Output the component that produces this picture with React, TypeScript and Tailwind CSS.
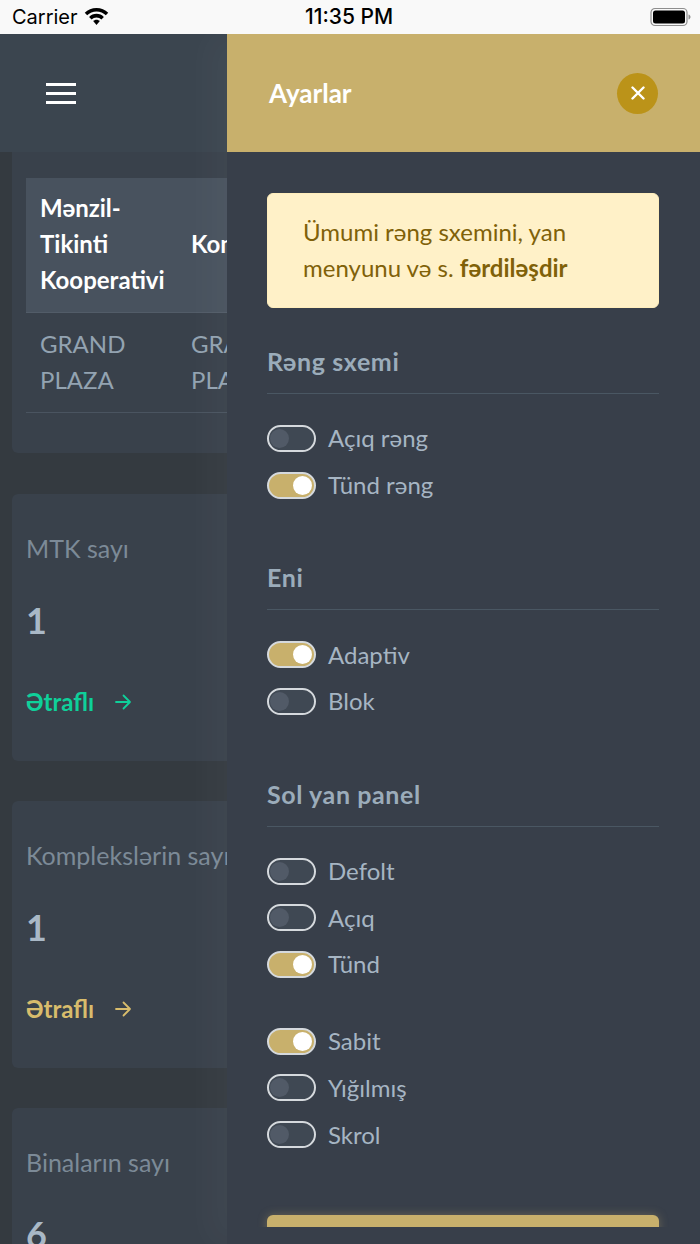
const font = "[font-family:Lato,'Noto_Sans',sans-serif]";

function Toggle({ on, label }: { on?: boolean; label: string }) {
  return (
    <div className="flex items-center h-[46.7px]">
      <div className={`relative w-[49px] h-[27px] rounded-full border-2 border-[#d5d9dd] ${on ? "bg-[#c8b06c]" : "bg-[#3f4853]"}`}>
        <div className={`absolute top-[2px] w-[19px] h-[19px] rounded-full ${on ? "right-[2px] bg-white" : "left-[1px] bg-[#515a67]"}`} />
      </div>
      <span className="ml-[12px] text-[24px] text-[#a6b5c3]">{label}</span>
    </div>
  );
}

function Section({ title, children, className }: { title: string; children: React.ReactNode; className?: string }) {
  return (
    <section className={className}>
      <h2 className="text-[25px] tracking-[0.6px] leading-[36px] font-bold text-[#9bacba] pb-[14px] -mt-[1px] border-b border-[#4a5763]">{title}</h2>
      <div className="mt-[21px]">{children}</div>
    </section>
  );
}

function StatCard({ title, value, color }: { title: string; value: string; color?: string }) {
  return (
    <div className="h-[267px] mb-[40px] rounded-l-[6px] bg-[#39414b] pl-[14px] pt-[36px] overflow-hidden">
      <div className="text-[25px] leading-[36px] text-[#7c8a97] whitespace-nowrap">{title}</div>
      <div className="mt-[27px] text-[36px] leading-[54px] font-bold text-[#a9b8c6]">{value}</div>
      {color && (
        <div className="mt-[37px] flex items-center gap-[20px] text-[24px] leading-[36px] font-bold" style={{ color }}>
          <span>Ətraflı</span>
          <svg width="18" height="18" viewBox="0 0 18 18" fill="none" stroke="currentColor" strokeWidth="1.8" strokeLinecap="round" strokeLinejoin="round">
            <path d="M2 9h14M9.500 2.500 16 9l-6.500 6.500" />
          </svg>
        </div>
      )}
    </div>
  );
}

export default function App() {
  return (
    <div className={`w-[700px] h-[1244px] overflow-hidden flex flex-col bg-[#343a40] ${font}`}>
      <div className="h-[34px] shrink-0 bg-[#f9f9f9] relative flex items-center justify-between pl-[12px] pr-[8px] text-black [font-family:Inter,sans-serif]">
        <div className="flex items-center gap-[6px]">
          <span className="text-[20px]">Carrier</span>
          <svg width="25" height="18" viewBox="0 0 26 19" fill="currentColor">
            <path d="M13 0C8.200 0 3.800 1.900.6 5l2.600 2.700C5.700 5.200 9.200 3.700 13 3.700s7.300 1.500 9.800 4L25.400 5C22.200 1.900 17.800 0 13 0z" />
            <path d="M13 6.200c-3 0-5.800 1.200-7.800 3.200l2.600 2.700c1.400-1.400 3.200-2.200 5.200-2.200s3.800.8 5.200 2.200l2.600-2.700c-2-2-4.800-3.200-7.800-3.200z" />
            <path d="M13 12.300c-1.400 0-2.600.6-3.500 1.400l3.500 4.300 3.500-4.300c-.9-.8-2.100-1.400-3.500-1.400z" />
          </svg>
        </div>
        <span className="absolute left-[305px] text-[21px] font-medium">11:35 PM</span>
        <svg width="42" height="20" viewBox="0 0 42 20">
          <rect x="1" y="1.500" width="36" height="17" rx="4" fill="none" stroke="#8e8e8e" strokeWidth="1.200" />
          <rect x="3" y="3.500" width="32" height="13" rx="2.500" fill="#000" />
          <path d="M38.500 7.500c1.200.3 2 1.300 2 2.500s-.8 2.200-2 2.500z" fill="#8e8e8e" />
        </svg>
      </div>

      <div className="flex-1 flex min-h-0">
        <div className="w-[227px] shrink-0 overflow-hidden flex flex-col">
          <div className="h-[118px] shrink-0 bg-[#3b454f] flex items-center pl-[46px]">
            <div className="w-[30px] flex flex-col gap-[6px]">
              <div className="h-[3px] bg-white" />
              <div className="h-[3px] bg-white" />
              <div className="h-[3px] bg-white" />
            </div>
          </div>
          <div className="pl-[12px] flex-1 min-h-0">
            <div className="h-[301px] mb-[41px] rounded-bl-[6px] bg-[#39414b] pl-[14px] pt-[26px] overflow-hidden">
              <div className="flex h-[135px] bg-[#48525e] border-b border-[#525c68] text-[24px] leading-[36px] font-bold text-white pt-[12px]">
                <div className="w-[165px] shrink-0 pl-[14px]">Mənzil-<br />Tikinti<br />Kooperativi</div>
                <div className="pt-[36px] whitespace-nowrap">Kompleks</div>
              </div>
              <div className="flex h-[100px] border-b border-[#4a5460] text-[24px] leading-[36px] text-[#93a3b1] pt-[13px]">
                <div className="w-[165px] shrink-0 pl-[14px]">GRAND<br />PLAZA</div>
                <div className="whitespace-nowrap">GRAND<br />PLAZA</div>
              </div>
            </div>
            <StatCard title="MTK sayı" value="1" color="#0fd09a" />
            <StatCard title="Komplekslərin sayı" value="1" color="#d8bc6c" />
            <StatCard title="Binaların sayı" value="6" />
          </div>
        </div>

        <div className="flex-1 flex flex-col bg-[#383f4a] shadow-[-20px_0_30px_rgba(255,255,255,0.03)] z-10">
          <div className="h-[118px] shrink-0 bg-[#c8b06c] flex items-center justify-between pl-[42px] pr-[42px]">
            <span className="text-[26px] font-bold text-white">Ayarlar</span>
            <div className="w-[41px] h-[41px] rounded-full bg-[#bb9319] flex items-center justify-center">
              <svg width="14" height="14" viewBox="0 0 14 14" stroke="white" strokeWidth="2.400" strokeLinecap="round">
                <path d="M1.500 1.500l11 11M12.500 1.500l-11 11" />
              </svg>
            </div>
          </div>
          <div className="flex-1 min-h-0 overflow-hidden pl-[40px] pr-[41px] pt-[41px]">
            <div className="h-[115px] rounded-[6px] bg-[#fff1c8] border border-[#ffeebc] pl-[35px] pt-[20px] text-[24px] leading-[36px] text-[#806109]">
              Ümumi rəng sxemini, yan<br />menyunu və s. <b className="font-bold">fərdiləşdir</b>
            </div>
            <Section title="Rəng sxemi" className="mt-[36px]">
              <Toggle label="Açıq rəng" />
              <Toggle on label="Tünd rəng" />
            </Section>
            <Section title="Eni" className="mt-[52px]">
              <Toggle on label="Adaptiv" />
              <Toggle label="Blok" />
            </Section>
            <Section title="Sol yan panel" className="mt-[52px]">
              <Toggle label="Defolt" />
              <Toggle label="Açıq" />
              <Toggle on label="Tünd" />
              <div className="h-[30px]" />
              <Toggle on label="Sabit" />
              <Toggle label="Yığılmış" />
              <Toggle label="Skrol" />
            </Section>
            <div className="mt-[57px] h-[50px] rounded-[6px] bg-[#c8b06c] shadow-[0_0_10px_rgba(200,176,108,0.35)]" />
          </div>
          <div className="h-[17px] shrink-0" />
        </div>
      </div>
    </div>
  );
}
